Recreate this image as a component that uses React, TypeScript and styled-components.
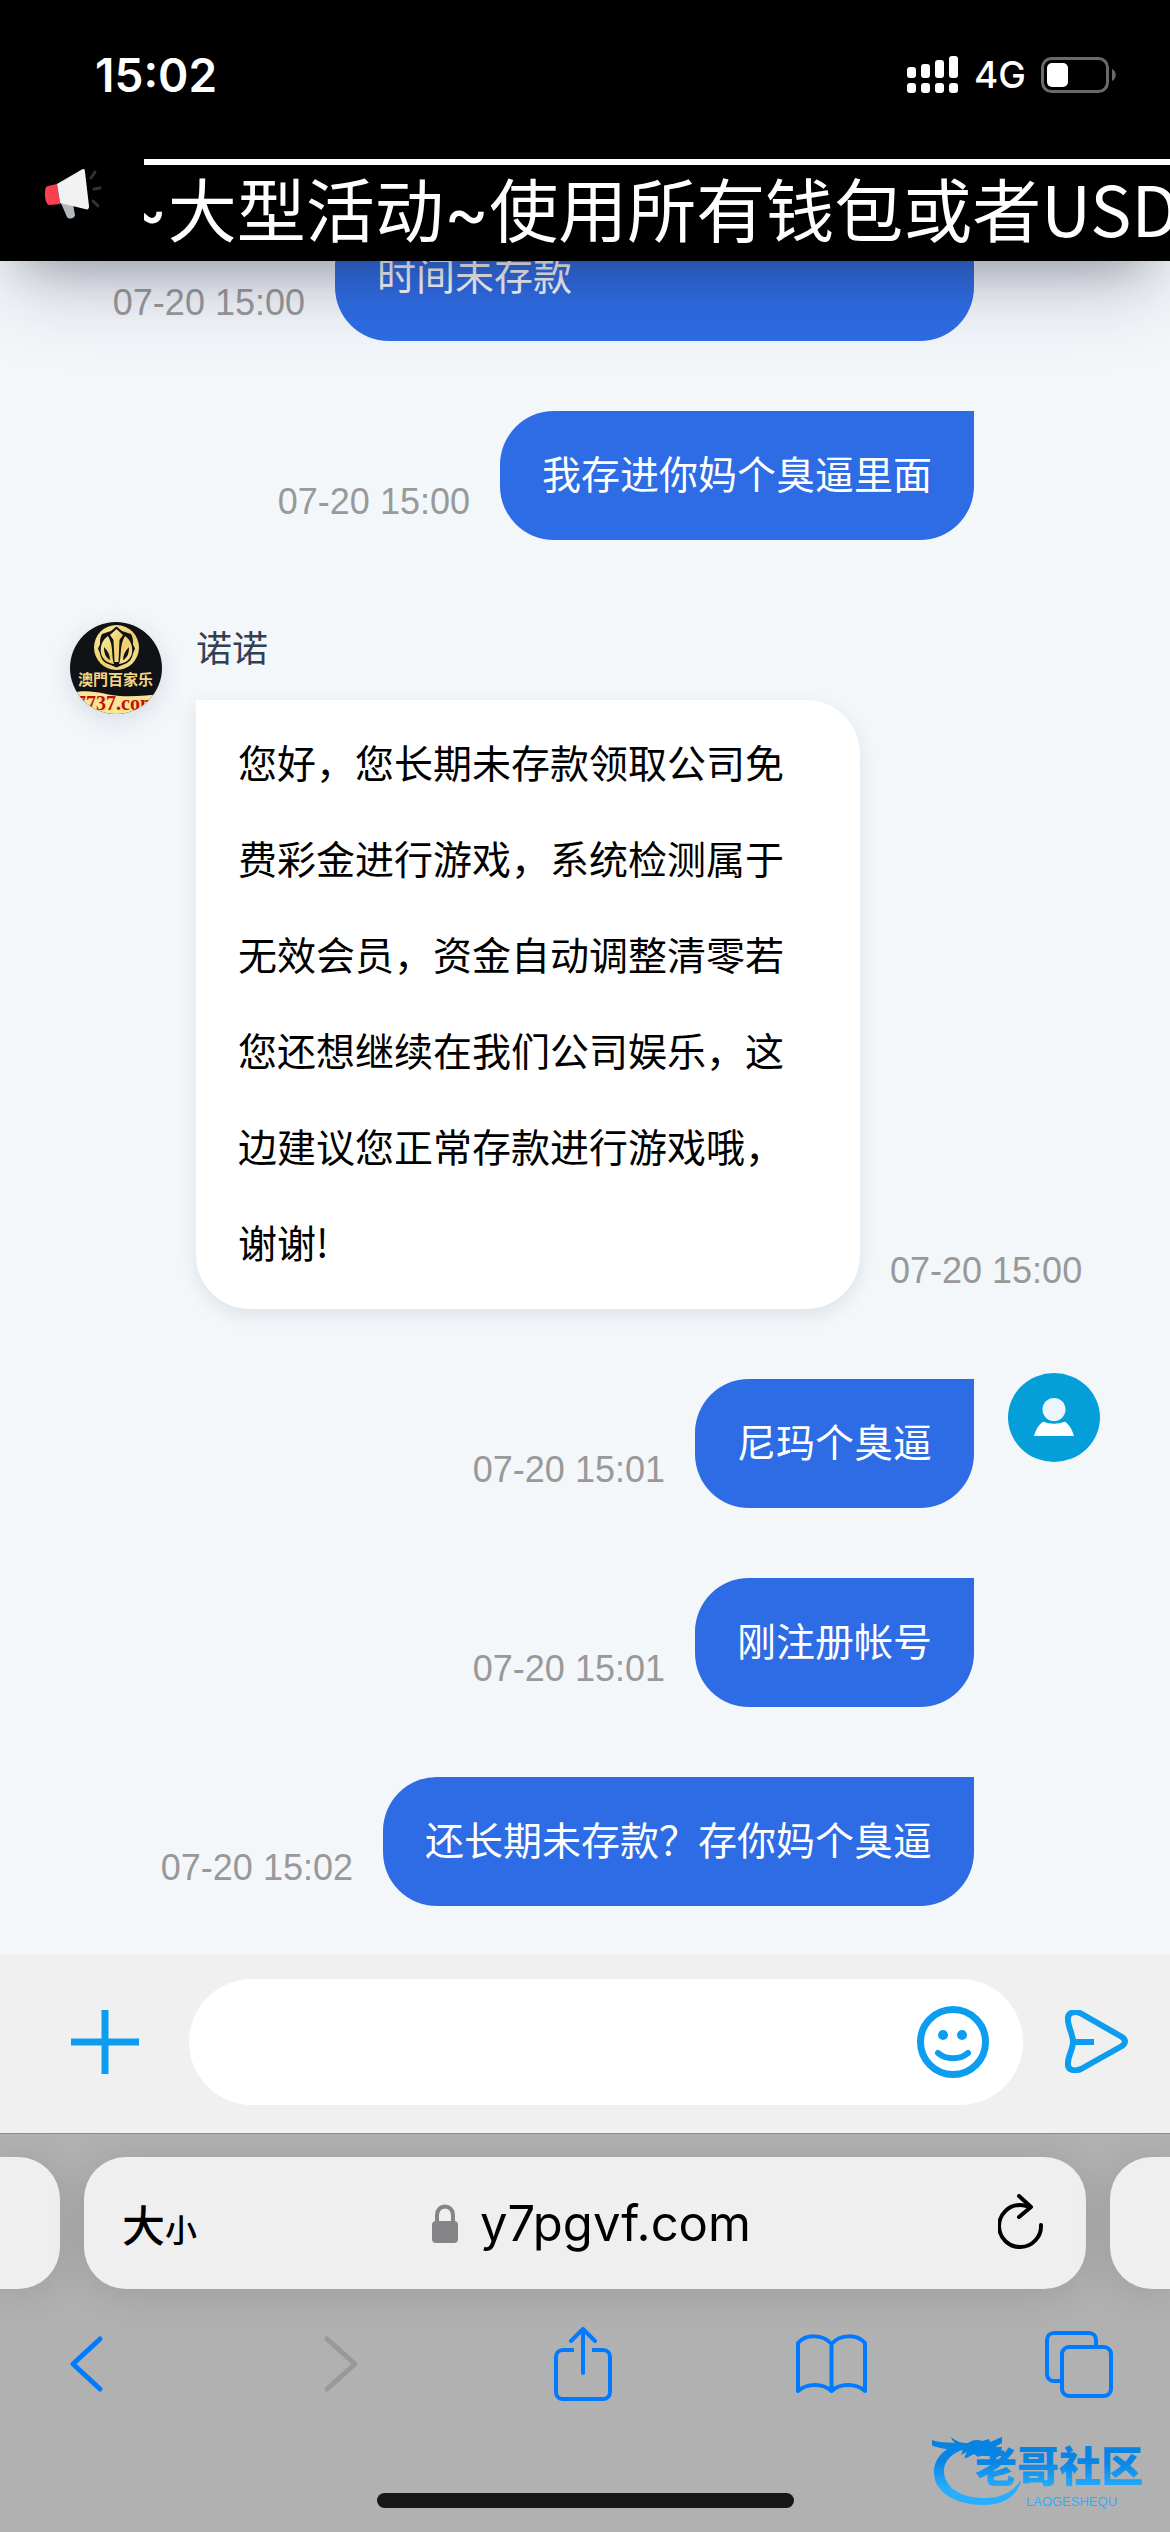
import React from "react";
import styled, { createGlobalStyle, css } from "styled-components";

const GlobalStyle = createGlobalStyle`
  *, *::before, *::after { box-sizing: border-box; }
  body { margin: 0; background: #f3f7fa; }
  button { margin: 0; padding: 0; border: 0; background: none; font: inherit; color: inherit; cursor: pointer; }
  svg { display: block; flex: none; }
`;

const cjk = `"Noto Sans CJK SC", sans-serif`;
const ui = `Inter, "Noto Sans CJK SC", sans-serif`;
const plain = `"Liberation Sans", "Noto Sans CJK SC", sans-serif`;

const Page = styled.div`
  display: flex;
  flex-direction: column;
  height: 100vh;
  overflow: hidden;
  font-family: ${cjk};
`;

/* ---------- header ---------- */

const Header = styled.header`
  position: relative;
  z-index: 1;
  flex: none;
  background: #000;
  color: #fff;
  box-shadow: 0 39px 81px -15px rgba(50, 50, 93, 0.25), 0 24px 48px -24px rgba(0, 0, 0, 0.3);
`;

const StatusBar = styled.div`
  display: flex;
  align-items: center;
  justify-content: space-between;
  height: 159px;
  padding: 0 54px 10px 95px;
  font-family: ${ui};
`;

const Clock = styled.time`
  font-size: 46px;
  font-weight: 600;
`;

const StatusIcons = styled.div`
  display: flex;
  align-items: center;
  gap: 15px;
  font-size: 37px;
  font-weight: 500;
`;

const Announcement = styled.div`
  display: flex;
  height: 102px;
`;

const HornSlot = styled.div`
  flex: none;
  width: 144px;
  padding: 8px 0 0 44px;
`;

const Marquee = styled.div`
  flex: 1;
  min-width: 0;
  overflow: hidden;
  border-top: 6px solid #fff;
  font-size: 69px;
  line-height: 84px;
  white-space: nowrap;
  text-indent: -22px;
`;

const Tilde = styled.span`
  font-family: ${ui};
  line-height: 1;
`;

/* ---------- conversation ---------- */

const Conversation = styled.main`
  display: flex;
  flex: 1;
  flex-direction: column;
  justify-content: flex-end;
  gap: 70px;
  min-height: 0;
  overflow: hidden;
  padding: 0 70px 48px;
  background: #f3f7fa;
`;

const Row = styled.article<{ $own?: boolean }>`
  display: flex;
  flex: none;
  flex-direction: ${(p) => (p.$own ? "row-reverse" : "row")};
  align-items: flex-start;
  gap: 34px;
  margin-top: ${(p) => (p.$own ? 0 : 18)}px;
`;

const AvatarSlot = styled.div`
  flex: none;
  width: 92px;
  margin-top: -6px;
`;

const BrandAvatar = styled.div`
  width: 92px;
  height: 92px;
  border-radius: 50%;
  box-shadow: 0 6px 24px rgba(40, 60, 100, 0.14);
`;

const Body = styled.div`
  flex: 1;
  min-width: 0;
`;

const Name = styled.div`
  margin-bottom: 36px;
  color: #333f52;
  font-size: 36px;
  line-height: 36px;
`;

const Line = styled.div<{ $own?: boolean }>`
  display: flex;
  flex-direction: ${(p) => (p.$own ? "row-reverse" : "row")};
  align-items: flex-end;
  gap: 30px;
`;

const Bubble = styled.p<{ $own?: boolean; $full?: boolean }>`
  margin: 0;
  padding: 13px 42px 20px;
  font-size: 39px;
  line-height: 96px;
  max-width: 664px;
  ${(p) =>
    p.$own
      ? css`
          background: #2d6ce5;
          color: #fff;
          border-radius: 54px 0 54px 54px;
        `
      : css`
          background: #fff;
          color: #000;
          border-radius: 0 54px 54px 54px;
          box-shadow: 0 6px 18px rgba(40, 60, 90, 0.11);
        `}
  ${(p) => p.$full && css`width: 639px;`}
`;

const Stamp = styled.time`
  flex: none;
  padding-bottom: 18px;
  color: #999;
  font-family: ${plain};
  font-size: 36px;
  line-height: 40px;
  white-space: nowrap;
`;

/* ---------- composer ---------- */

const Composer = styled.form`
  display: flex;
  flex: none;
  align-items: center;
  height: 179px;
  padding: 0 42px 4px 71px;
  background: #f0f0f0;
`;

const Field = styled.div`
  display: flex;
  flex: 1;
  align-items: center;
  min-width: 0;
  height: 126px;
  margin: 0 42px 0 50px;
  padding: 0 34px 0 54px;
  border-radius: 63px;
  background: #fff;
`;

const TextInput = styled.input`
  flex: 1;
  min-width: 0;
  border: 0;
  outline: 0;
  background: transparent;
  font-family: ${cjk};
  font-size: 39px;
`;

/* ---------- browser chrome ---------- */

const Browser = styled.footer`
  position: relative;
  flex: none;
  padding-top: 23px;
  border-top: 1px solid #8c8c8c;
  background: #b1b1b1;
  font-family: ${ui};
  overflow: hidden;
`;

const TabStrip = styled.div`
  display: flex;
  gap: 24px;
  height: 132px;
`;

const tabSurface = css`
  background: #efefef;
  box-shadow: 0 4px 40px rgba(0, 0, 0, 0.12);
`;

const TabEdge = styled.div<{ $side: "left" | "right" }>`
  flex: none;
  width: 60px;
  border-radius: ${(p) => (p.$side === "left" ? "0 42px 42px 0" : "42px 0 0 42px")};
  ${tabSurface}
`;

const AddressBar = styled.div`
  display: flex;
  flex: 1;
  align-items: center;
  justify-content: space-between;
  min-width: 0;
  padding: 0 42px 0 38px;
  border-radius: 42px;
  ${tabSurface}
`;

const TextSize = styled.button`
  display: flex;
  align-items: baseline;
  font-family: ${cjk};
  font-size: 43px;
  font-weight: 500;
`;

const Smaller = styled.span`
  font-size: 32px;
`;

const Address = styled.button`
  display: flex;
  align-items: center;
  gap: 22px;
  margin-right: 12px;
  font-size: 49px;
`;

const Toolbar = styled.nav`
  display: flex;
  align-items: center;
  justify-content: space-between;
  height: 150px;
  padding: 0 57px 0 53px;
  color: #007aff;
`;

const ToolButton = styled.button`
  display: flex;
  justify-content: center;
  width: 68px;
  &:disabled { color: #999; }
`;

const HomeArea = styled.div`
  display: flex;
  justify-content: center;
  height: 93px;
  padding-top: 54px;
`;

const HomeBar = styled.div`
  width: 417px;
  height: 15px;
  border-radius: 8px;
  background: #171717;
`;

const Watermark = styled.div`
  position: absolute;
  right: 16px;
  bottom: 22px;
  display: flex;
  width: 222px;
  height: 78px;
`;

/* ---------- drawings ---------- */

const Horn = () => (
  <svg width="58" height="54" viewBox="0 0 58 54" aria-hidden="true">
    <path d="M16 34l13 3 2 11c0 3-6 5-8 2z" fill="#b2b8bb" />
    <path d="M13 17L4 19c-3 1-3 4-3 8 0 5 1 11 5 11l10-1z" fill="#f8404f" />
    <path d="M13 17L37 3c3-2 4-1 4 2l4 34c0 3-1 4-4 3L16 36z" fill="#f2f2f2" />
    <path d="M47 11l4-6M50 22l6-1M49 34l5 5" stroke="#2f3437" strokeWidth="3" strokeLinecap="round" />
  </svg>
);

const Signal = () => (
  <svg width="52" height="42" viewBox="0 0 52 42" fill="#fff" aria-hidden="true">
    <rect x="0" y="13" width="9" height="11" rx="3" />
    <rect x="14" y="10" width="9" height="14" rx="3" />
    <rect x="28" y="6" width="9" height="18" rx="3" />
    <rect x="42" y="2" width="9" height="22" rx="3" />
    {[0, 14, 28, 42].map((x) => (
      <rect key={x} x={x} y="29" width="9" height="10" rx="3" />
    ))}
  </svg>
);

const Battery = () => (
  <svg width="75" height="36" viewBox="0 0 75 36" aria-hidden="true">
    <rect x="1.5" y="1.5" width="65" height="33" rx="9" fill="none" stroke="#6a6a6a" strokeWidth="3" />
    <rect x="6" y="6" width="21" height="24" rx="5" fill="#fff" />
    <path d="M71 12c5 2 5 10 0 12z" fill="#6a6a6a" />
  </svg>
);

const Brand = () => (
  <svg width="92" height="92" viewBox="0 0 92 92" role="img" aria-label="澳門百家乐">
    <defs>
      <clipPath id="disc"><circle cx="46" cy="46" r="46" /></clipPath>
      <linearGradient id="gold" x1="0" x2="1" y1="0" y2="1">
        <stop offset="0" stopColor="#f9eba0" />
        <stop offset="0.55" stopColor="#f0cf6a" />
        <stop offset="1" stopColor="#f8e699" />
      </linearGradient>
    </defs>
    <g clipPath="url(#disc)">
      <rect width="92" height="92" fill="#111216" />
      <circle cx="46.500" cy="25.500" r="22.500" fill="url(#gold)" />
      <path d="M46.500 4.500l5.500 4.500 9 3c2 3 2 7 2 10.500l2 4-2 5c-1 5-3 8-7 10l-5 2-4.500 2-4.500-2-5-2c-4-2-6-5-7-10l-2-5 2-4c0-3.500 0-7.500 2-10.500l9-3z" fill="#111216" />
      <path d="M46.500 7l6.500 6-3.500 5-1 22h-4l-1-22-3.500-5z" fill="url(#gold)" />
      <path d="M38 14c-6 4-8 11-7 17 1 6 6 10 13 11-3-8 0-18-6-28zM55 14c6 4 8 11 7 17-1 6-6 10-13 11 3-8 0-18 6-28z" fill="url(#gold)" />
      <path d="M34 25c0 7 2 11 6 13 0-5-2-9-6-13zM59 25c0 7-2 11-6 13 0-5 2-9 6-13z" fill="#111216" />
      <path d="M0 71c22-5 34 2 50 3 16 1 28-1 42-2v20H0z" fill="#f8e596" />
      <text x="8" y="62.500" fontFamily='"Noto Sans CJK TC", sans-serif' fontSize="15" fontWeight="700" fill="#f2d683">澳門百家乐</text>
      <text x="6" y="88" fontFamily='"Liberation Serif", serif' fontSize="20" fontWeight="700" fill="#c4100c">7737.com</text>
    </g>
  </svg>
);

const Visitor = () => (
  <svg width="92" height="92" viewBox="0 0 92 92" role="img" aria-label="我">
    <ellipse cx="46" cy="44.500" rx="46" ry="44.500" fill="#049fd9" />
    <circle cx="46" cy="36.500" r="11.500" fill="#eaf5fd" />
    <path d="M36 48c6 3 14 3 20 0 5 3 8 8 10 15H26c2-7 5-12 10-15z" fill="#fff" />
    <path d="M35 47.500c7 3 15 3 22 0" fill="none" stroke="#049fd9" strokeWidth="2" />
  </svg>
);

const Plus = () => (
  <svg width="68" height="64" viewBox="0 0 68 64" aria-hidden="true">
    <path d="M34 0v64M0 32h68" stroke="#0d9df0" strokeWidth="7" />
  </svg>
);

const Smile = () => (
  <svg width="72" height="72" viewBox="0 0 72 72" fill="none" stroke="#0d9df0" aria-hidden="true">
    <circle cx="36" cy="36" r="32.500" strokeWidth="7" />
    <circle cx="26" cy="29" r="5" fill="#0d9df0" stroke="none" />
    <circle cx="45" cy="29" r="5" fill="#0d9df0" stroke="none" />
    <path d="M21 47c8 7 22 7 30 0" strokeWidth="6" strokeLinecap="round" />
  </svg>
);

const Send = () => (
  <svg width="63" height="63" viewBox="0 0 63 63" fill="none" stroke="#0d9df0" strokeWidth="6" strokeLinejoin="round" aria-hidden="true">
    <path d="M16 3.500L57 27c4 3 4 6 0 9L16 59c-7 3-14 1-13-6 0-8 5-13 5-21S3 17 3 10C2 3 9 0 16 3.500z" />
    <path d="M8 32h21" />
  </svg>
);

const Lock = () => (
  <svg width="26" height="39" viewBox="0 0 26 39" aria-hidden="true">
    <path d="M5 18v-7a8 8.500 0 0 1 16 0v7" fill="none" stroke="#858587" strokeWidth="4" />
    <rect y="17" width="26" height="22" rx="4" fill="#858587" />
  </svg>
);

const Reload = () => (
  <svg width="46" height="58" viewBox="0 0 46 58" fill="none" stroke="#000" strokeWidth="4" strokeLinecap="round" strokeLinejoin="round" aria-hidden="true">
    <path d="M43 31a21 21 0 1 1-21-20c4 0 7 1 10 2" />
    <path d="M21 2l12 11-12 10" />
  </svg>
);

const Chevron = ({ forward }: { forward?: boolean }) => (
  <svg width="62" height="60" viewBox="0 0 62 60" fill="none" stroke="currentColor" strokeWidth="5" strokeLinecap="round" strokeLinejoin="round" aria-hidden="true">
    <path d={forward ? "M23 5l28 25-28 25" : "M44 5L17 30l27 25"} />
  </svg>
);

const Share = () => (
  <svg width="58" height="74" viewBox="0 0 58 74" fill="none" stroke="currentColor" strokeWidth="4" strokeLinecap="round" strokeLinejoin="round" aria-hidden="true">
    <path d="M20 23h-11c-4 0-7 3-7 7v35c0 4 3 7 7 7h40c4 0 7-3 7-7V30c0-4-3-7-7-7h-11" strokeLinecap="butt" />
    <path d="M29 46V3M17 14L29 2l12 12" />
  </svg>
);

const Book = () => (
  <svg width="71" height="60" viewBox="0 0 71 60" fill="none" stroke="currentColor" strokeWidth="4" strokeLinecap="round" strokeLinejoin="round" aria-hidden="true">
    <path d="M35.500 57V10C27 0 10 0 2 9v48c9-8 25-8 33.500 0C44 49 60 49 69 57V9C61 0 44 0 35.500 10" />
  </svg>
);

const Tabs = () => (
  <svg width="68" height="67" viewBox="0 0 68 67" fill="none" stroke="currentColor" strokeWidth="4" aria-hidden="true">
    <path d="M17 50H9c-4 0-7-3-7-7V9c0-4 3-7 7-7h35c4 0 7 3 7 7v7" />
    <rect x="17" y="16" width="49" height="49" rx="7" />
  </svg>
);

const DragonLogo = () => (
  <svg width="222" height="78" viewBox="0 0 222 78" role="img" aria-label="老哥社区 LAOGESHEQU">
    <defs>
      <linearGradient id="sea" x1="0" x2="0" y1="0" y2="78" gradientUnits="userSpaceOnUse">
        <stop offset="0" stopColor="#047fe0" />
        <stop offset="0.400" stopColor="#0a87e6" />
        <stop offset="0.720" stopColor="#28aefc" />
        <stop offset="1" stopColor="#28aefc" />
      </linearGradient>
    </defs>
    <g fill="url(#sea)">
      <path d="M31 11C11 15 1 28 2 42c1 19 23 31 49 31 20 0 35-9 38-25-8 12-20 18-36 18-24 0-40-10-41-26C11 30 20 20 34 17z" />
      <path d="M0 8c8 3 15 2 23 3-2-2-3-3-4-6 6 5 11 6 17 6 4-3 9-4 14-2l7-2 1 3 12-5v6l-7 4h7l-1 5-10-1 8 6c-6 1-9-1-14-3l-7 3-4-3c-4 2-6 4-10 4l3-6-6 3 2-6c-9-1-16 1-22-1-5-1-12-3-19-8z" />
      <text x="43" y="50" fontFamily='"Noto Sans CJK SC", sans-serif' fontSize="42" fontWeight="900">老哥社区</text>
      <text x="94" y="74" fontFamily='"Liberation Sans", sans-serif' fontSize="13">LAOGESHEQU</text>
    </g>
  </svg>
);

/* ---------- page ---------- */

type Message = { text: string; at: string; own?: boolean; avatar?: boolean; full?: boolean; name?: string };

const messages: Message[] = [
  { own: true, text: "时间未存款", at: "07-20 15:00", full: true },
  { own: true, text: "我存进你妈个臭逼里面", at: "07-20 15:00" },
  {
    name: "诺诺",
    avatar: true,
    text: "您好，您长期未存款领取公司免费彩金进行游戏，系统检测属于无效会员，资金自动调整清零若您还想继续在我们公司娱乐，这边建议您正常存款进行游戏哦，谢谢!",
    at: "07-20 15:00",
  },
  { own: true, avatar: true, text: "尼玛个臭逼", at: "07-20 15:01" },
  { own: true, text: "刚注册帐号", at: "07-20 15:01" },
  { own: true, text: "还长期未存款？存你妈个臭逼", at: "07-20 15:02" },
];

const ChatMessage = ({ own, avatar, full, name, text, at }: Message) => (
  <Row $own={own}>
    <AvatarSlot>
      {avatar && (own ? <Visitor /> : <BrandAvatar><Brand /></BrandAvatar>)}
    </AvatarSlot>
    <Body>
      {name && <Name>{name}</Name>}
      <Line $own={own}>
        <Bubble $own={own} $full={full}>{text}</Bubble>
        <Stamp>{at}</Stamp>
      </Line>
    </Body>
  </Row>
);

export default function App() {
  return (
    <Page lang="zh-CN">
      <GlobalStyle />
      <Header>
        <StatusBar>
          <Clock>15:02</Clock>
          <StatusIcons>
            <Signal />
            <span>4G</span>
            <Battery />
          </StatusIcons>
        </StatusBar>
        <Announcement>
          <HornSlot><Horn /></HornSlot>
          <Marquee>
            <Tilde>~</Tilde>大型活动<Tilde>~</Tilde>使用所有钱包或者USD
          </Marquee>
        </Announcement>
      </Header>

      <Conversation>
        {messages.map((m, i) => <ChatMessage key={i} {...m} />)}
      </Conversation>

      <Composer onSubmit={(e) => e.preventDefault()}>
        <button type="button" aria-label="更多"><Plus /></button>
        <Field>
          <TextInput type="text" aria-label="消息" />
          <button type="button" aria-label="表情"><Smile /></button>
        </Field>
        <button type="submit" aria-label="发送"><Send /></button>
      </Composer>

      <Browser>
        <TabStrip>
          <TabEdge $side="left" />
          <AddressBar>
            <TextSize type="button">大<Smaller>小</Smaller></TextSize>
            <Address type="button"><Lock />y7pgvf.com</Address>
            <button type="button" aria-label="刷新"><Reload /></button>
          </AddressBar>
          <TabEdge $side="right" />
        </TabStrip>
        <Toolbar>
          <ToolButton type="button" aria-label="后退"><Chevron /></ToolButton>
          <ToolButton type="button" aria-label="前进" disabled><Chevron forward /></ToolButton>
          <ToolButton type="button" aria-label="分享"><Share /></ToolButton>
          <ToolButton type="button" aria-label="书签"><Book /></ToolButton>
          <ToolButton type="button" aria-label="标签页"><Tabs /></ToolButton>
        </Toolbar>
        <HomeArea><HomeBar /></HomeArea>
        <Watermark><DragonLogo /></Watermark>
      </Browser>
    </Page>
  );
}
